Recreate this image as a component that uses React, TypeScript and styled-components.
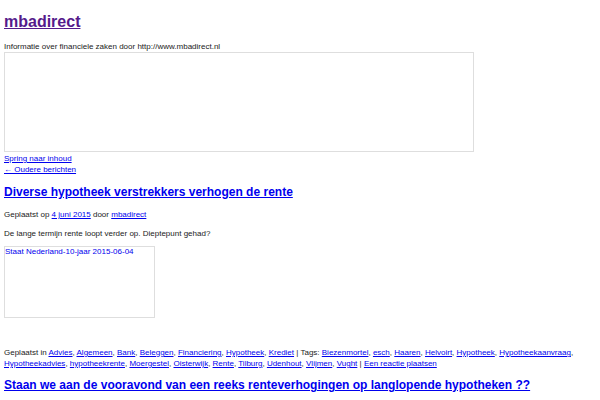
import React from "react";
import styled, { createGlobalStyle } from "styled-components";

const GlobalStyle = createGlobalStyle`
  html, body { margin: 0; padding: 0; background: #fff; }
  body {
    font-family: "Liberation Sans", Arial, Helvetica, sans-serif;
    font-size: 8px;
    line-height: 11px;
    color: #222;
  }
`;

const Page = styled.div`
  padding: 0 4px;
  width: 592px;
`;

const SiteTitle = styled.h1`
  font-size: 16px;
  line-height: 19px;
  font-weight: bold;
  margin: 12px 0 10px;
`;

const TitleLink = styled.a`
  color: #551a8b;
  text-decoration: underline;
`;

const Tagline = styled.div`
  color: #222;
`;

const HeaderImage = styled.div`
  box-sizing: border-box;
  width: 470px;
  height: 100px;
  border: 1px solid #dedede;
  margin-bottom: 1px;
`;

const Link = styled.a`
  color: #0000ee;
  text-decoration: underline;
`;

const NavLink = styled(Link)`
  display: block;
`;

const PostTitle = styled.h2<{ $top: number }>`
  font-size: 12px;
  line-height: 14px;
  font-weight: bold;
  margin: ${(p) => p.$top}px 0 10px;
`;

const Meta = styled.div`
  color: #222;
`;

const Entry = styled.p`
  margin: 8px 0 0;
`;

const ImageBox = styled.a`
  display: block;
  box-sizing: border-box;
  width: 151px;
  height: 72px;
  margin-top: 7px;
  border: 1px solid #dedede;
  color: #0000ee;
  text-decoration: none;
  padding-left: 0;
  line-height: 10px;
`;

const PostFooter = styled.div`
  margin-top: 29px;
  color: #222;
`;

const categories = [
  "Advies",
  "Algemeen",
  "Bank",
  "Beleggen",
  "Financiering",
  "Hypotheek",
  "Krediet",
];

const tags = [
  "Biezenmortel",
  "esch",
  "Haaren",
  "Helvoirt",
  "Hypotheek",
  "Hypotheekaanvraag",
  "Hypotheekadvies",
  "hypotheekrente",
  "Moergestel",
  "Oisterwijk",
  "Rente",
  "Tilburg",
  "Udenhout",
  "Vlijmen",
  "Vught",
];

function LinkList({ items }: { items: string[] }) {
  return (
    <>
      {items.map((item, i) => (
        <React.Fragment key={item + i}>
          <Link href="#">{item}</Link>
          {i < items.length - 1 ? ", " : ""}
        </React.Fragment>
      ))}
    </>
  );
}

export default function App() {
  return (
    <>
      <GlobalStyle />
      <Page>
        <SiteTitle>
          <TitleLink href="#">mbadirect</TitleLink>
        </SiteTitle>
        <Tagline>Informatie over financiele zaken door http://www.mbadirect.nl</Tagline>
        <HeaderImage />
        <NavLink href="#">Spring naar inhoud</NavLink>
        <NavLink href="#">← Oudere berichten</NavLink>

        <PostTitle $top={10}>
          <Link href="#">Diverse hypotheek verstrekkers verhogen de rente</Link>
        </PostTitle>
        <Meta>
          Geplaatst op <Link href="#">4 juni 2015</Link> door <Link href="#">mbadirect</Link>
        </Meta>
        <Entry>De lange termijn rente loopt verder op. Dieptepunt gehad?</Entry>
        <ImageBox href="#">Staat Nederland-10-jaar 2015-06-04</ImageBox>
        <PostFooter>
          Geplaatst in <LinkList items={categories} /> | Tags: <LinkList items={tags} /> |{" "}
          <Link href="#">Een reactie plaatsen</Link>
        </PostFooter>

        <PostTitle $top={9}>
          <Link href="#">
            Staan we aan de vooravond van een reeks renteverhogingen op langlopende hypotheken ??
          </Link>
        </PostTitle>
      </Page>
    </>
  );
}
